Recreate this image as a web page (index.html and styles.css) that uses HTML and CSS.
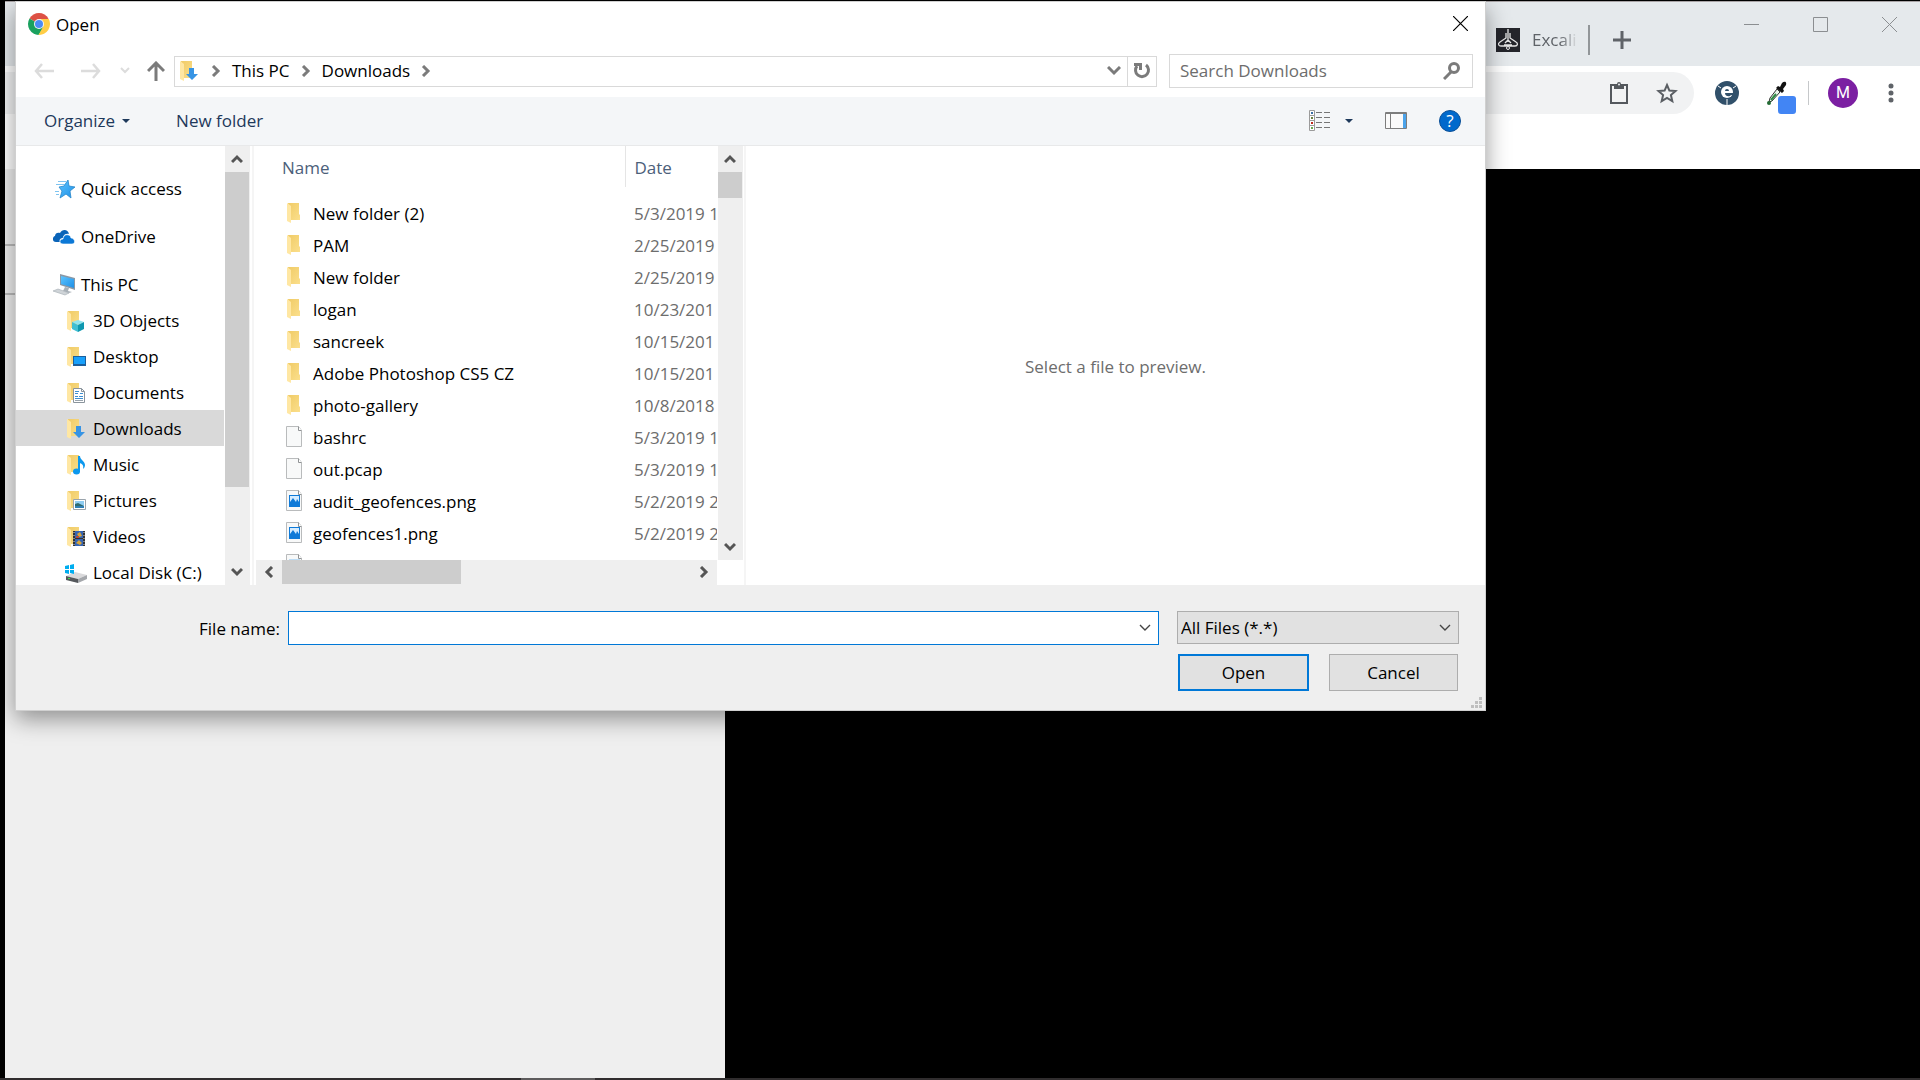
FILE: index.html
```html
<!DOCTYPE html>
<html lang="en">
<head>
  <meta charset="UTF-8">
  <meta name="viewport" content="width=device-width, initial-scale=1.0">
  <title>Open</title>
  <link rel="stylesheet" href="styles.css">
</head>
<body>
  <svg class="sprite" aria-hidden="true">
    <defs>
      <linearGradient id="gold" x1="0" x2="1" y1="0" y2="1">
        <stop offset="0" stop-color="#f0cb66"/>
        <stop offset="1" stop-color="#fbdf8c"/>
      </linearGradient>
      <linearGradient id="sky" x1="0" x2="1" y1="0" y2="1">
        <stop offset="0" stop-color="#5cc4ff"/>
        <stop offset="1" stop-color="#1e8fe6"/>
      </linearGradient>
    </defs>
    <symbol id="folder" viewBox="0 0 22 22">
      <path fill="url(#gold)" d="M3 1h11v11l1 1v5H6z"/>
      <path fill="#ffe7a3" d="M2 1l4 3v17l-4-2z"/>
    </symbol>
    <symbol id="objects" viewBox="0 0 22 22">
      <use href="#folder"/>
      <path fill="#8fe4ee" d="M7 12l6-2 6 2-6 3z"/>
      <path fill="#3fbfd2" d="M7 12l6 3v7l-6-3z"/>
      <path fill="#0e98b0" d="M19 12l-6 3v7l6-3z"/>
    </symbol>
    <symbol id="desktop" viewBox="0 0 22 22">
      <use href="#folder"/>
      <path fill="#1c5f9c" d="M8 10h13v10H8z"/>
      <path fill="#18a0fb" d="M9 11h11v7H9z"/>
    </symbol>
    <symbol id="documents" viewBox="0 0 22 22">
      <use href="#folder"/>
      <path fill="#fff" stroke="#8a949c" d="M8.500 6.500h8l3 3v11h-11z"/>
      <path fill="none" stroke="#8a949c" d="M16.500 6.500v3h3"/>
      <path stroke="#3d8fd1" d="M10 9.500h4M10 11.500h3M15 11.500h3M10 14.500h3M14 14.500h4M10 16.500h8"/>
      <path stroke="#9aa4ac" d="M10 18.500h8"/>
    </symbol>
    <symbol id="downloads" viewBox="0 0 22 22">
      <use href="#folder"/>
      <path fill="#3794e4" d="M11 8h5v6h4l-6 6-6-6h3z"/>
    </symbol>
    <symbol id="music" viewBox="0 0 22 22">
      <use href="#folder"/>
      <ellipse cx="11.500" cy="17.500" rx="3.500" ry="3" fill="#0c98ee"/>
      <path fill="#0c98ee" d="M13 2h2c0 4 5 5 5 9 0 2-1 3-2 4 1-4-1-5-3-6v9h-2z"/>
    </symbol>
    <symbol id="pictures" viewBox="0 0 22 22">
      <use href="#folder"/>
      <path fill="#fff" stroke="#9aa4ac" d="M8.500 9.500h12v10h-12z"/>
      <path fill="#8fcdf2" d="M10 11h9v7h-9z"/>
      <path fill="#2e6b70" d="M10 14l3-1 6 3v1h-9z"/>
      <path fill="#2f7fb5" d="M10 16h9v2h-9z"/>
    </symbol>
    <symbol id="videos" viewBox="0 0 22 22">
      <use href="#folder"/>
      <path fill="#333" d="M8 5h12v15H8z"/>
      <path fill="#3565b5" d="M10 5h8v7h-8zM10 13h8v7h-8z"/>
      <path fill="#d9a53a" d="M12 8l3-2 2 4-3 1zM11 17l3-3 3 3-2 2z"/>
      <path fill="#b94a3a" d="M11 10h3v2h-3z"/>
      <path stroke="#ddd" stroke-dasharray="1 2" d="M9 6v14M19 6v14"/>
    </symbol>
    <symbol id="disk" viewBox="0 0 22 22">
      <path fill="#d9d9db" d="M1 14l9-4 12 3-9 4z"/>
      <path fill="#55585c" d="M1 14l12 3v4L1 18z"/>
      <path fill="#a4a7ab" d="M13 17l9-4v4l-9 4z"/>
      <path fill="#3fe04b" d="M3 16h2v1H3z"/>
      <path fill="#00adef" d="M0 4l4-1v4H0zM5 3l4-1v5H5zM0 8h4v4l-4-1zM5 8h4v4l-4-1z"/>
    </symbol>
    <symbol id="star" viewBox="0 0 22 22">
      <path fill="url(#sky)" stroke="#2686cc" stroke-width=".8" d="M15 2l1 6 6 1-5 4 1 7-5-4-6 4 2-7-3-4 5-1z"/>
      <path stroke="#5eb5ec" stroke-width=".8" d="M5 3.500h8M3 6.500h9M2 13.500h4M3 16.500h3"/>
    </symbol>
    <symbol id="onedrive" viewBox="0 0 22 22">
      <path fill="#0a64b8" d="M3 16c-4 0-4-5-1-6 0-3 3-4 5-3 2-4 8-4 9 1-5-1-6 3-6 4-3 0-4 2-3 4z"/>
      <path fill="#0b78d6" stroke="#fff" stroke-width=".6" d="M10 18c-4 0-4-5 0-5 0-5 7-6 8-1 4 0 5 6 1 6z"/>
    </symbol>
    <symbol id="computer" viewBox="0 0 22 22">
      <path fill="#8b98a5" d="M7 0l15 4v12L7 11z"/>
      <path fill="url(#sky)" d="M8 2l13 3v9L8 10z"/>
      <path fill="#a9b1b8" d="M12 13l4 1-1 3 4 1-3 1-6-2z"/>
      <path fill="#cfd4d8" stroke="#a3abb2" stroke-width=".6" d="M0 17l5-2 11 4-4 2z"/>
    </symbol>
    <symbol id="page" viewBox="0 0 22 22">
      <path fill="#f8f9f9" stroke="#b9bbbc" d="M1.500.500h12l3 4v16h-15z"/>
      <path fill="#fff" stroke="#909395" d="M13.500.500v4h3"/>
    </symbol>
    <symbol id="image" viewBox="0 0 22 22">
      <use href="#page"/>
      <path fill="#0f7ad8" d="M4 5h11v12H4z"/>
      <path fill="#d5ecff" d="M5 6h9v6l-2-3-1 3-3-4-3 4z"/>
    </symbol>
    <symbol id="thin" viewBox="0 0 22 22">
      <use href="#page"/>
      <path fill="#bcdcf5" d="M4 5h11v12H4z"/>
    </symbol>
    <symbol id="up" viewBox="0 0 12 12">
      <path fill="none" stroke="#555" stroke-width="3" d="M1 9l5-5 5 5"/>
    </symbol>
    <symbol id="down" viewBox="0 0 12 12">
      <path fill="none" stroke="#555" stroke-width="3" d="M1 3l5 5 5-5"/>
    </symbol>
    <symbol id="left" viewBox="0 0 12 12">
      <path fill="none" stroke="#555" stroke-width="3" d="M9 1L4 6l5 5"/>
    </symbol>
    <symbol id="right" viewBox="0 0 12 12">
      <path fill="none" stroke="#555" stroke-width="3" d="M3 1l5 5-5 5"/>
    </symbol>
    <symbol id="crumb" viewBox="0 0 12 12">
      <path fill="none" stroke="#7b7b7b" stroke-width="3" d="M3 1l5 5-5 5"/>
    </symbol>
    <symbol id="caret" viewBox="0 0 8 5">
      <path fill="#1e395b" d="M0 0h8L4 4z"/>
    </symbol>
    <symbol id="thin-down" viewBox="0 0 12 12">
      <path fill="none" stroke="#444" stroke-width="1.400" d="M1 3l5 5 5-5"/>
    </symbol>
  </svg>

  <div class="browser">
    <header class="tabs">
      <div class="tab">
        <svg class="favicon" viewBox="0 0 24 24">
          <path fill="#24252b" d="M0 0h24v24H0z"/>
          <path fill="none" stroke="#e8e8e8" stroke-width="1.300" d="M12 1v13M10 5v5l-6 4c-3 2-1 4 1 4h14c3 0 3-3 1-4l-6-4V5M9 15l3-3 3 3M8 17h8M12 18v3"/>
          <circle cx="12" cy="20" r="1.500" fill="#24252b" stroke="#e8e8e8"/>
        </svg>
        <span class="tab-title">Excali</span>
      </div>
      <button class="new-tab" aria-label="New tab">
        <svg width="18" height="18" viewBox="0 0 18 18"><path stroke="#5f6368" stroke-width="3" d="M9 0v18M0 9h18"/></svg>
      </button>
      <div class="window-buttons">
        <button aria-label="Minimize"><svg width="15" height="15"><path stroke="#8b8e91" d="M0 7.500h15"/></svg></button>
        <button aria-label="Maximize"><svg width="15" height="15"><path fill="none" stroke="#8b8e91" d="M.500.500h14v14H.500z"/></svg></button>
        <button aria-label="Close window"><svg width="15" height="15"><path stroke="#8b8e91" d="M0 0l15 15M15 0L0 15"/></svg></button>
      </div>
    </header>
    <div class="tools">
      <div class="omnibox">
        <button aria-label="Clipboard">
          <svg width="22" height="24" viewBox="0 0 22 24"><path fill="none" stroke="#54585d" stroke-width="2" d="M3 4h16v18H3z"/><path fill="#54585d" d="M6 3h3a2 2 0 0 1 4 0h3v5H6z"/><circle cx="11" cy="3.500" r="1" fill="#f1f2f3"/></svg>
        </button>
        <button aria-label="Bookmark">
          <svg width="22" height="22" viewBox="0 0 22 22"><path fill="none" stroke="#5a5e63" stroke-width="2" d="M11 3l2.400 5.600 6.100.5-4.600 4 1.400 6-5.300-3.200-5.300 3.200 1.400-6-4.600-4 6.100-.5z"/></svg>
        </button>
      </div>
      <button class="ext" aria-label="Extension">
        <svg width="24" height="24" viewBox="0 0 24 24">
          <circle cx="12" cy="12" r="12" fill="#31506a"/>
          <circle cx="12" cy="11" r="6" fill="#fff"/>
          <path fill="#31506a" d="M10 10a2 2 0 0 1 4 0zM10 12h9v2h-3c-1 2-6 2-6-2z"/>
          <path stroke="#fff" d="M3 5l3 2M21 5l-3 2M12 18v6"/>
        </svg>
      </button>
      <button class="ext" aria-label="Color picker">
        <svg width="30" height="34" viewBox="0 0 30 34">
          <path fill="#111" d="M10 8l2-2 2 1 2-4c2-2 5-2 4 2l-3 4 1 2-2 2z"/>
          <path fill="#eaf5ea" stroke="#333" d="M11 9l3 3-8 9-3 1 1-4z"/>
          <path stroke="#2f8a43" stroke-width="2" d="M10 14l-5 6"/>
          <circle cx="3" cy="23" r="2" fill="#236b34"/>
          <rect x="12" y="16" width="18" height="18" rx="3" fill="#4285f4"/>
        </svg>
      </button>
      <span class="bar"></span>
      <button class="avatar">M</button>
      <button class="more" aria-label="Menu">
        <svg width="6" height="20" viewBox="0 0 6 20"><path stroke="#5f6368" stroke-width="5" stroke-linecap="round" d="M3 3h0M3 10h0M3 17h0"/></svg>
      </button>
    </div>
    <main class="page">
      <div class="panel">
        <hr>
        <hr>
      </div>
    </main>
  </div>
  <div class="taskbar"><span></span></div>

  <section class="dialog" role="dialog" aria-label="Open">
    <header class="title-row">
      <svg class="chrome" viewBox="0 0 22 22">
        <path fill="#dd5144" d="M11 11L1.500 5.500a11 11 0 0 1 19 0z"/>
        <path fill="#1aa15f" d="M11 11L1.500 5.500A11 11 0 0 0 10.500 22L16 14z"/>
        <path fill="#ffcd46" d="M11 6h9.800A11 11 0 0 1 10.500 22L15.500 13z"/>
        <circle cx="11" cy="11" r="5" fill="#f5f5f5"/>
        <circle cx="11" cy="11" r="4" fill="#4b8bf5"/>
      </svg>
      <h1>Open</h1>
      <button class="close" aria-label="Close">
        <svg width="15" height="15"><path stroke="#000" stroke-width="1.200" d="M0 0l15 15M15 0L0 15"/></svg>
      </button>
    </header>

    <nav class="nav-row">
      <button aria-label="Back"><svg width="20" height="16" viewBox="0 0 20 16"><path fill="none" stroke="#dcdcdc" stroke-width="2.500" d="M20 8H2M8 1L2 8l6 7"/></svg></button>
      <button class="forward" aria-label="Forward"><svg width="20" height="16" viewBox="0 0 20 16"><path fill="none" stroke="#dcdcdc" stroke-width="2.500" d="M0 8h18M12 1l6 7-6 7"/></svg></button>
      <button class="recent" aria-label="Recent"><svg width="10" height="8" viewBox="0 0 10 8"><path fill="none" stroke="#dcdcdc" stroke-width="2" d="M1 1l4 4 4-4"/></svg></button>
      <button class="parent" aria-label="Up"><svg width="18" height="20" viewBox="0 0 18 20"><path fill="none" stroke="#7b7b7b" stroke-width="3" d="M9 20V3M1 10l8-8 8 8"/></svg></button>
      <div class="address">
        <svg class="icon"><use href="#downloads"/></svg>
        <svg class="arrow"><use href="#crumb"/></svg>
        <a href="#">This PC</a>
        <svg class="arrow"><use href="#crumb"/></svg>
        <a href="#">Downloads</a>
        <svg class="arrow"><use href="#crumb"/></svg>
        <button class="history" aria-label="Previous locations"><svg width="14" height="10" viewBox="0 0 14 10"><path fill="none" stroke="#7b7b7b" stroke-width="3" d="M1 1l6 6 6-6"/></svg></button>
        <button class="refresh" aria-label="Refresh"><svg width="18" height="18" viewBox="0 0 18 18"><path fill="none" stroke="#7b7b7b" stroke-width="3" d="M13 3a6.500 6.500 0 1 1-9 1"/><path fill="#7b7b7b" d="M1 1h8v7H6V4H1z"/></svg></button>
      </div>
      <div class="search">
        <input type="search" placeholder="Search Downloads" aria-label="Search Downloads">
        <svg width="18" height="18" viewBox="0 0 18 18"><circle cx="11" cy="6" r="4.500" fill="none" stroke="#7b7b7b" stroke-width="3"/><path stroke="#7b7b7b" stroke-width="3" d="M8 10l-7 7"/></svg>
      </div>
    </nav>

    <div class="toolbar">
      <button>Organize <svg class="caret"><use href="#caret"/></svg></button>
      <button class="new-folder">New folder</button>
      <button class="view" aria-label="Change view">
        <svg width="22" height="22" viewBox="0 0 22 22">
          <path fill="#fff" stroke="#9b9b9b" d="M.500.500h5v20h-5zM.500 5.500h5M.500 10.500h5M.500 15.500h5"/>
          <path fill="#3b6ea5" d="M2 2h2v2H2z"/><path fill="#6a7f3f" d="M2 7h2v2H2z"/><path fill="#c0281c" d="M2 12h2v2H2z"/><path fill="#6aa84f" d="M2 17h2v2H2z"/>
          <path stroke="#767676" d="M7 2.500h6M15 2.500h6M7 7.500h6M15 7.500h6M7 12.500h6M15 12.500h6M7 17.500h6M15 17.500h6"/>
        </svg>
        <svg class="caret"><use href="#caret"/></svg>
      </button>
      <button class="preview-toggle" aria-label="Preview pane">
        <svg width="22" height="18" viewBox="0 0 22 18">
          <path fill="#fafafa" stroke="#7d7d7d" d="M.500.500h21v16H.500zM5.500 1v15"/>
          <path stroke="#7d7d7d" d="M1 1.500h20"/>
          <path fill="#4ba3ea" d="M18 2h3v14h-3z"/>
        </svg>
      </button>
      <button class="help">?</button>
    </div>

    <div class="content">
      <aside class="sidebar">
        <ul class="tree">
          <li class="root"><a href="#"><svg class="icon"><use href="#star"/></svg>Quick access</a></li>
          <li class="root"><a href="#"><svg class="icon"><use href="#onedrive"/></svg>OneDrive</a></li>
          <li class="root"><a href="#"><svg class="icon"><use href="#computer"/></svg>This PC</a></li>
          <li><a href="#"><svg class="icon"><use href="#objects"/></svg>3D Objects</a></li>
          <li><a href="#"><svg class="icon"><use href="#desktop"/></svg>Desktop</a></li>
          <li><a href="#"><svg class="icon"><use href="#documents"/></svg>Documents</a></li>
          <li class="selected"><a href="#"><svg class="icon"><use href="#downloads"/></svg>Downloads</a></li>
          <li><a href="#"><svg class="icon"><use href="#music"/></svg>Music</a></li>
          <li><a href="#"><svg class="icon"><use href="#pictures"/></svg>Pictures</a></li>
          <li><a href="#"><svg class="icon"><use href="#videos"/></svg>Videos</a></li>
          <li><a href="#"><svg class="icon"><use href="#disk"/></svg>Local Disk (C:)</a></li>
        </ul>
        <div class="scroll">
          <button aria-label="Scroll up"><svg class="arrow"><use href="#up"/></svg></button>
          <div class="track"><div class="thumb tree-thumb"></div></div>
          <button aria-label="Scroll down"><svg class="arrow"><use href="#down"/></svg></button>
        </div>
      </aside>

      <div class="files">
        <div class="list">
          <table>
            <thead>
              <tr><th class="name">Name</th><th>Date</th></tr>
            </thead>
            <tbody>
              <tr><td><svg class="icon"><use href="#folder"/></svg>New folder (2)</td><td>5/3/2019 1</td></tr>
              <tr><td><svg class="icon"><use href="#folder"/></svg>PAM</td><td>2/25/2019</td></tr>
              <tr><td><svg class="icon"><use href="#folder"/></svg>New folder</td><td>2/25/2019</td></tr>
              <tr><td><svg class="icon"><use href="#folder"/></svg>logan</td><td>10/23/201</td></tr>
              <tr><td><svg class="icon"><use href="#folder"/></svg>sancreek</td><td>10/15/201</td></tr>
              <tr><td><svg class="icon"><use href="#folder"/></svg>Adobe Photoshop CS5 CZ</td><td>10/15/201</td></tr>
              <tr><td><svg class="icon"><use href="#folder"/></svg>photo-gallery</td><td>10/8/2018</td></tr>
              <tr><td><svg class="icon"><use href="#page"/></svg>bashrc</td><td>5/3/2019 1</td></tr>
              <tr><td><svg class="icon"><use href="#page"/></svg>out.pcap</td><td>5/3/2019 1</td></tr>
              <tr><td><svg class="icon"><use href="#image"/></svg>audit_geofences.png</td><td>5/2/2019 2</td></tr>
              <tr><td><svg class="icon"><use href="#image"/></svg>geofences1.png</td><td>5/2/2019 2</td></tr>
              <tr><td><svg class="icon"><use href="#thin"/></svg>geofences.png</td><td></td></tr>
            </tbody>
          </table>
        </div>
        <div class="scroll">
          <button aria-label="Scroll up"><svg class="arrow"><use href="#up"/></svg></button>
          <div class="track"><div class="thumb list-thumb"></div></div>
          <button aria-label="Scroll down"><svg class="arrow"><use href="#down"/></svg></button>
        </div>
        <div class="scroll across">
          <button aria-label="Scroll left"><svg class="arrow"><use href="#left"/></svg></button>
          <div class="track"><div class="thumb"></div></div>
          <button aria-label="Scroll right"><svg class="arrow"><use href="#right"/></svg></button>
        </div>
      </div>

      <div class="preview">Select a file to preview.</div>
    </div>

    <form class="controls">
      <label for="filename">File name:</label>
      <div class="combo">
        <input type="text" id="filename">
        <button type="button" aria-label="Show recent names"><svg class="arrow"><use href="#thin-down"/></svg></button>
      </div>
      <div class="filter">
        <select aria-label="File type"><option>All Files (*.*)</option></select>
        <svg class="arrow"><use href="#thin-down"/></svg>
      </div>
      <div class="buttons">
        <button type="button" class="primary">Open</button>
        <button type="button">Cancel</button>
      </div>
      <svg class="grip" width="11" height="11"><path fill="#bfbfbf" d="M8 0h3v3H8zM4 4h3v3H4zM8 4h3v3H8zM0 8h3v3H0zM4 8h3v3H4zM8 8h3v3H8z"/></svg>
    </form>
  </section>
</body>
</html>
```
FILE: styles.css
```css
* {
  box-sizing: border-box;
}
body {
  margin: 0;
  height: 100vh;
  display: flex;
  flex-direction: column;
  overflow: hidden;
  background: #000;
  color: #000;
  font-family: "Open Sans", "Noto Sans", sans-serif;
  font-size: 17px;
  line-height: 24px;
}
button, input, select {
  font: inherit;
  color: inherit;
  background: none;
  border: 0;
  padding: 0;
  outline: 0;
}
button {
  display: flex;
  align-items: center;
  justify-content: center;
}
a {
  color: inherit;
  text-decoration: none;
}
svg {
  display: block;
  flex: none;
}
.sprite {
  position: absolute;
  width: 0;
  height: 0;
}
.icon {
  width: 22px;
  height: 22px;
}
.arrow {
  width: 12px;
  height: 12px;
}
.caret {
  width: 8px;
  height: 5px;
}

/* browser behind the dialog */
.browser {
  flex: 1;
  display: flex;
  flex-direction: column;
  padding: 1px 0 0 5px;
}
.tabs {
  height: 65px;
  display: flex;
  justify-content: flex-end;
  align-items: center;
  padding: 0 23px 0 0;
  background: #e5e9ec;
  border-top: 1px solid #a9a4a6;
}
.tab {
  display: flex;
  align-items: center;
  gap: 12px;
  height: 30px;
  margin-top: 12px;
  border-right: 2px solid #929699;
}
.favicon {
  width: 24px;
  height: 24px;
}
.tab-title {
  width: 56px;
  overflow: hidden;
  color: #5f6368;
  -webkit-mask-image: linear-gradient(to right, #000 28px, transparent 46px);
  mask-image: linear-gradient(to right, #000 28px, transparent 46px);
}
.new-tab {
  margin: 12px 113px 0 23px;
}
.window-buttons {
  display: flex;
  gap: 54px;
  margin-bottom: 20px;
}
.tools {
  height: 103px;
  display: flex;
  align-items: flex-start;
  padding: 6px 26px 0 0;
  background: #fff;
}
.omnibox {
  flex: 1;
  height: 42px;
  display: flex;
  align-items: center;
  justify-content: flex-end;
  gap: 26px;
  padding-right: 16px;
  background: #f1f2f3;
  border-radius: 0 21px 21px 0;
}
.ext {
  height: 42px;
  margin-left: 21px;
}
.ext + .ext {
  margin-left: 27px;
  padding-top: 8px;
}
.bar {
  width: 1px;
  height: 24px;
  margin: 9px 19px 0 12px;
  background: #c6c8ca;
}
.avatar {
  width: 30px;
  height: 30px;
  margin: 6px 30px 0 0;
  border-radius: 50%;
  background: #7b1fa2;
  color: #fff;
  font-family: Roboto, sans-serif;
  font-size: 16px;
}
.more {
  height: 42px;
}
.page {
  flex: 1;
}
.panel {
  width: 720px;
  height: 100%;
  padding-top: 75px;
  background: #efefef;
}
.panel hr {
  height: 2px;
  margin: 0 0 47px;
  border: 0;
  background: #bbb;
}
.taskbar {
  height: 2px;
  padding-left: 521px;
  background: #302d2e;
}
.taskbar span {
  display: block;
  width: 74px;
  height: 2px;
  background: #5d5b5c;
}

/* file dialog */
.dialog {
  position: absolute;
  top: 1px;
  left: 15px;
  right: 434px;
  border: 1px solid #d0d0d0;
  background: #fff;
  box-shadow: 0 8px 22px rgba(0, 0, 0, 0.4);
}
.title-row {
  height: 46px;
  display: flex;
  align-items: center;
  gap: 6px;
  padding: 0 17px 3px 12px;
}
.chrome {
  width: 22px;
  height: 22px;
}
.title-row h1 {
  margin: 0;
  padding-top: 2px;
  font-size: 17px;
  font-weight: 400;
}
.close {
  margin-left: auto;
}
.nav-row {
  height: 49px;
  display: flex;
  align-items: center;
  padding: 0 12px 3px 18px;
}
.forward {
  margin-left: 27px;
}
.recent {
  margin-left: 19px;
}
.parent {
  margin: 0 9px 0 17px;
}
.address {
  flex: 1;
  height: 31px;
  display: flex;
  align-items: center;
  gap: 10px;
  padding-left: 3px;
  border: 1px solid #d9d9d9;
}
.history {
  margin-left: auto;
  margin-right: -4px;
}
.refresh {
  width: 29px;
  height: 29px;
  border-left: 1px solid #d9d9d9;
}
.search {
  width: 304px;
  height: 34px;
  display: flex;
  align-items: center;
  margin-left: 12px;
  padding: 0 11px 0 10px;
  border: 1px solid #d9d9d9;
}
.search input {
  flex: 1;
  min-width: 0;
}
.search input::placeholder {
  color: #6d6d6d;
}
.toolbar {
  height: 49px;
  display: flex;
  align-items: center;
  padding: 0 24px 0 28px;
  background: #f4f6f8;
  border-bottom: 1px solid #e8e9ea;
  color: #1e395b;
}
.toolbar .caret {
  margin-left: 7px;
}
.new-folder {
  margin-left: 46px;
}
.view {
  margin-left: auto;
}
.view .caret {
  margin-left: 14px;
}
.preview-toggle {
  margin: 0 32px;
}
.help {
  width: 22px;
  height: 22px;
  border: 1px solid #0a4f97;
  border-radius: 50%;
  background: #0069cc;
  color: #fff;
}

.content {
  height: 439px;
  display: flex;
}
.sidebar {
  width: 238px;
  display: flex;
  padding-right: 2px;
  border-right: 2px solid #f5f5f5;
}
.tree {
  flex: 1;
  height: 100%;
  margin: 0;
  padding: 24px 0 0;
  overflow: hidden;
  list-style: none;
}
.tree li {
  height: 36px;
  margin-right: 1px;
  padding-left: 49px;
}
.tree .root {
  padding-left: 37px;
}
.root + .root {
  margin-top: 12px;
}
.tree a {
  height: 100%;
  display: flex;
  align-items: center;
  gap: 6px;
  padding-top: 2px;
  white-space: nowrap;
}
.tree .selected {
  background: #d9d9d9;
}

/* scroll bars */
.scroll {
  width: 25px;
  display: flex;
  flex-direction: column;
  background: #efefef;
}
.scroll button {
  width: 24px;
  height: 26px;
}
.track {
  flex: 1;
}
.thumb {
  width: 24px;
  background: #cdcdcd;
}
.tree-thumb {
  height: 315px;
}
.list-thumb {
  height: 26px;
}
.across {
  width: auto;
  flex-direction: row;
  margin: 0 1px 0 2px;
}
.across button {
  width: 26px;
  height: 24px;
}
.across .thumb {
  width: 179px;
  height: 24px;
}

.files {
  width: 492px;
  display: grid;
  grid-template-columns: 1fr 25px;
  grid-template-rows: 414px 25px;
  padding-right: 1px;
  border-right: 2px solid #f5f5f5;
}
.list {
  margin-right: 1px;
  overflow: hidden;
}
table {
  width: 600px;
  table-layout: fixed;
  border-collapse: collapse;
}
th {
  height: 41px;
  padding: 3px 0 0 9px;
  text-align: left;
  font-weight: 400;
  color: #4c607a;
}
.name {
  width: 371px;
  padding-left: 28px;
  border-right: 1px solid #e5e5e5;
}
tbody::before {
  content: "";
  display: block;
  height: 10px;
}
td {
  height: 32px;
  padding: 2px 0 0 9px;
  white-space: nowrap;
  color: #6d6d6d;
}
td:first-child {
  padding-left: 31px;
  color: #000;
}
td .icon {
  display: inline-block;
  margin-right: 6px;
  vertical-align: -4px;
}
.preview {
  flex: 1;
  display: flex;
  align-items: center;
  justify-content: center;
  padding-top: 2px;
  color: #6d6d6d;
}

.controls {
  position: relative;
  display: grid;
  grid-template-columns: 264px 1fr 282px;
  gap: 9px 0;
  padding: 26px 26px 19px 0;
  background: #efefef;
}
.controls label {
  padding: 6px 0 0;
  text-align: right;
}
.combo {
  height: 34px;
  display: flex;
  margin: 0 18px 0 8px;
  background: #fff;
  border: 1px solid #0078d7;
}
.combo input {
  flex: 1;
  min-width: 0;
  padding: 0 4px;
}
.combo button {
  width: 26px;
}
.filter {
  display: grid;
  align-items: center;
  height: 33px;
  background: #e1e1e1;
  border: 1px solid #adadad;
}
.filter select, .filter .arrow {
  grid-area: 1 / 1;
}
.filter select {
  height: 31px;
  padding-left: 3px;
  appearance: none;
}
.filter .arrow {
  justify-self: end;
  margin-right: 7px;
  pointer-events: none;
}
.buttons {
  grid-column: 3;
  display: flex;
  gap: 20px;
  padding: 0 1px;
}
.buttons button {
  flex: 1;
  height: 37px;
  background: #e1e1e1;
  border: 1px solid #adadad;
}
.buttons .primary {
  border: 2px solid #0078d7;
}
.grip {
  position: absolute;
  right: 3px;
  bottom: 2px;
}
```
